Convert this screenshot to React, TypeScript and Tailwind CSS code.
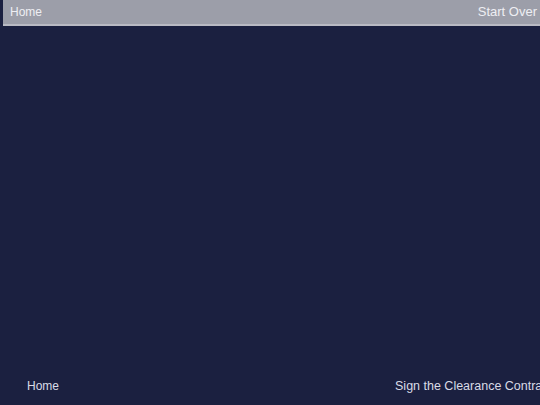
import React from 'react';

const font = { fontFamily: '"Liberation Sans", Arial, sans-serif' };

const App = () => {
  return (
    <div className="w-[540px] h-[405px] overflow-hidden bg-[#1b2040] flex flex-col" style={font}>
      <header className="ml-[3px] w-[calc(100%+3px)] h-[26px] shrink-0 bg-[#9c9ea9] border-b-2 border-[#b9bac3] flex items-center justify-between pl-[7px] pr-[9px] text-[12px] text-[#eeeef3]">
        <span>Home</span>
        <span className="text-[13px]">Start Over</span>
      </header>
      <main className="flex-1" />
      <footer className="h-[28px] shrink-0 flex items-start pl-[27px] text-[12px] text-[#d9dbe6] whitespace-nowrap">
        <span>Home</span>
        <span className="ml-[336px] text-[12.5px]">Sign the Clearance Contract</span>
      </footer>
    </div>
  );
};

export default App;
